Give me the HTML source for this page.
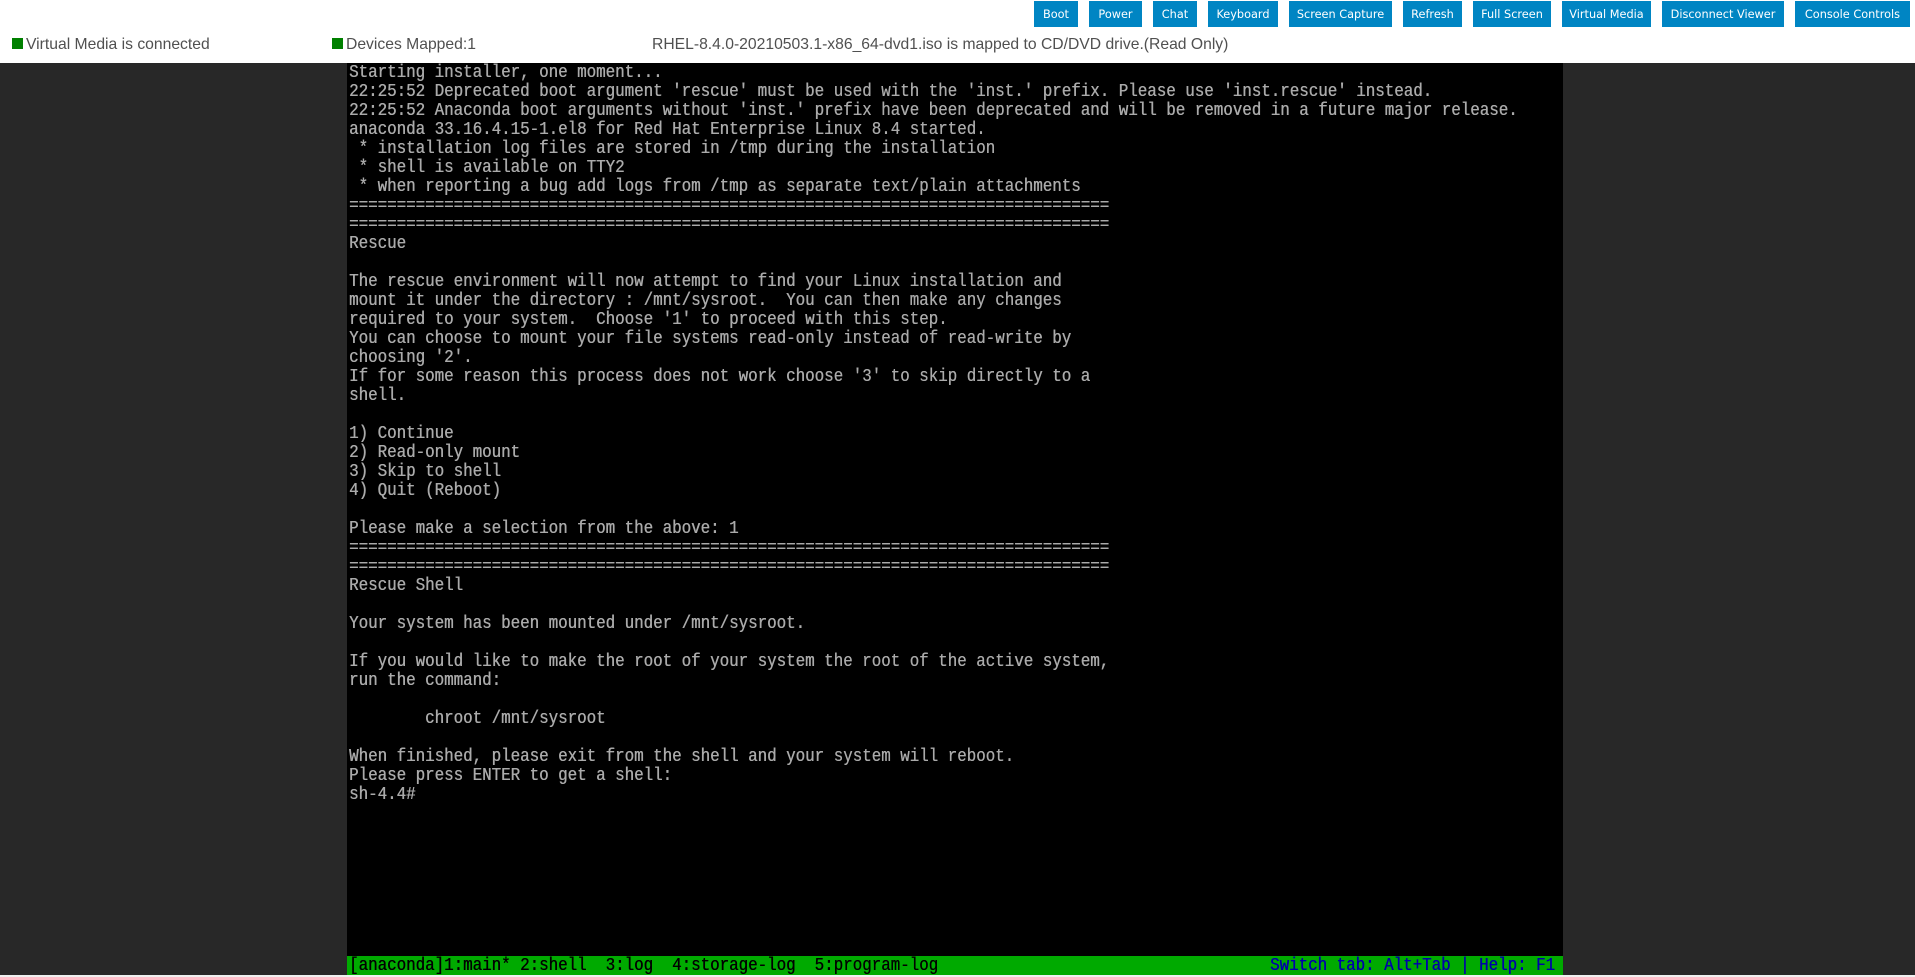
<!DOCTYPE html>
<html><head><meta charset="utf-8"><title>Virtual Console</title>
<style>
html,body{margin:0;padding:0;background:#fff;width:1915px;height:977px;overflow:hidden}
.b{position:absolute;top:1px;height:26px;background:#0085c3;color:#fff;text-align:center;font:11.3px/27px "DejaVu Sans",sans-serif;white-space:nowrap}
.t{position:absolute;top:36px;font:15.7px/18px "Liberation Sans",sans-serif;color:#505050;white-space:nowrap}
.sq{position:absolute;top:38px;width:11px;height:11px;background:#008000}
.side{position:absolute;top:63px;height:912px;background:#282828}
#term{position:absolute;left:347px;top:63px;width:1216px;height:912px;background:#000;overflow:hidden}
pre{position:absolute;left:1.5px;top:1px;margin:0;font:18px/19px "Liberation Mono",monospace;color:#aaa;text-shadow:.4px 0 #aaa;transform:scaleX(.8796);transform-origin:0 0;white-space:pre}
#bar{position:absolute;left:0;top:893px;width:1216px;height:19px;background:#00aa00}
#bar pre{color:#000;text-shadow:.4px 0 #000;top:1px}
#bar pre.r{color:#0000aa;text-shadow:.4px 0 #0000aa;left:922.5px}
#foot{position:absolute;left:0;top:975px;width:1915px;height:2px;background:#f0f0f0}
</style></head><body>
<div class="b" style="left:1034px;width:44px">Boot</div>
<div class="b" style="left:1089px;width:53px">Power</div>
<div class="b" style="left:1153px;width:44px">Chat</div>
<div class="b" style="left:1208px;width:70px">Keyboard</div>
<div class="b" style="left:1289px;width:103px">Screen Capture</div>
<div class="b" style="left:1403px;width:59px">Refresh</div>
<div class="b" style="left:1473px;width:78px">Full Screen</div>
<div class="b" style="left:1562px;width:89px">Virtual Media</div>
<div class="b" style="left:1662px;width:122px">Disconnect Viewer</div>
<div class="b" style="left:1795px;width:115px">Console Controls</div>
<div class="sq" style="left:12px"></div>
<div class="t" style="left:26px">Virtual Media is connected</div>
<div class="sq" style="left:332px"></div>
<div class="t" style="left:346px">Devices Mapped:1</div>
<div class="t" style="left:652px">RHEL-8.4.0-20210503.1-x86_64-dvd1.iso is mapped to CD/DVD drive.(Read Only)</div>
<div class="side" style="left:0;width:347px"></div>
<div class="side" style="left:1563px;width:352px"></div>
<div id="term"><pre>Starting installer, one moment...
22:25:52 Deprecated boot argument 'rescue' must be used with the 'inst.' prefix. Please use 'inst.rescue' instead.
22:25:52 Anaconda boot arguments without 'inst.' prefix have been deprecated and will be removed in a future major release.
anaconda 33.16.4.15-1.el8 for Red Hat Enterprise Linux 8.4 started.
 * installation log files are stored in /tmp during the installation
 * shell is available on TTY2
 * when reporting a bug add logs from /tmp as separate text/plain attachments
================================================================================
================================================================================
Rescue

The rescue environment will now attempt to find your Linux installation and
mount it under the directory : /mnt/sysroot.  You can then make any changes
required to your system.  Choose '1' to proceed with this step.
You can choose to mount your file systems read-only instead of read-write by
choosing '2'.
If for some reason this process does not work choose '3' to skip directly to a
shell.

1) Continue
2) Read-only mount
3) Skip to shell
4) Quit (Reboot)

Please make a selection from the above: 1
================================================================================
================================================================================
Rescue Shell

Your system has been mounted under /mnt/sysroot.

If you would like to make the root of your system the root of the active system,
run the command:

        chroot /mnt/sysroot

When finished, please exit from the shell and your system will reboot.
Please press ENTER to get a shell:
sh-4.4#</pre>
<div id="bar"><pre>[anaconda]1:main* 2:shell  3:log  4:storage-log  5:program-log</pre><pre class="r">Switch tab: Alt+Tab | Help: F1</pre></div>
</div>
<div id="foot"></div>
</body></html>
